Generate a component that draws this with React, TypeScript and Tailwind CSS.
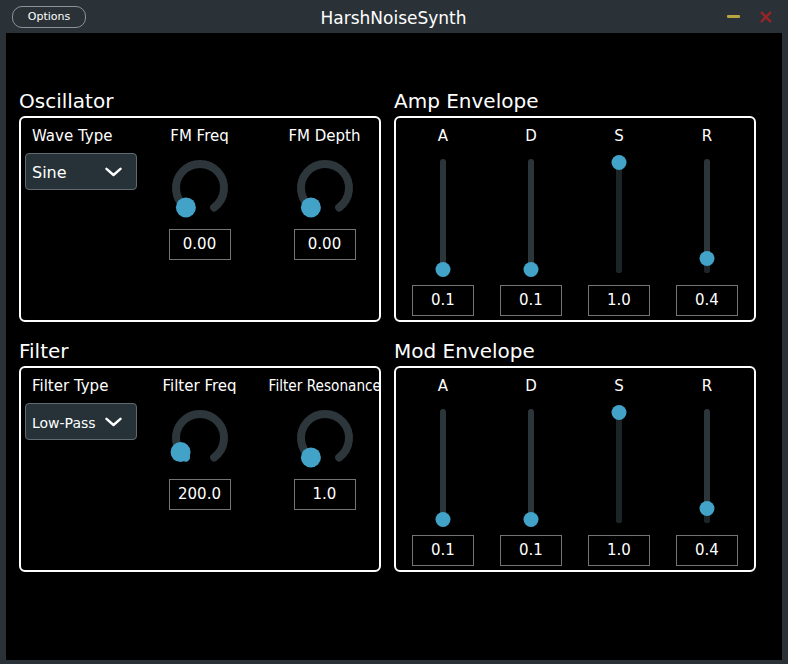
const BLUE = '#42a2c8'

type EnvParam = { name: string; value: string; thumbY: number }

const ampEnv: EnvParam[] = [
  { name: 'A', value: '0.1', thumbY: 119 },
  { name: 'D', value: '0.1', thumbY: 119 },
  { name: 'S', value: '1.0', thumbY: 12 },
  { name: 'R', value: '0.4', thumbY: 108 },
]

// knob angle in degrees, clockwise from 12 o'clock
function polar(deg: number, r: number) {
  const a = (deg * Math.PI) / 180
  return { x: 32 + r * Math.sin(a), y: 32 - r * Math.cos(a) }
}

function Knob({ angle }: { angle: number }) {
  const start = polar(216, 24)
  const end = polar(504, 24)
  const pos = polar(angle, 24)
  const large = angle - 216 > 180 ? 1 : 0
  return (
    <svg width="64" height="64" viewBox="0 0 64 64" className="mt-[11px]">
      <path
        d={`M${start.x} ${start.y} A24 24 0 1 1 ${end.x} ${end.y}`}
        fill="none"
        stroke="#2d363b"
        strokeWidth="8"
        strokeLinecap="round"
      />
      {angle > 216 && (
        <path
          d={`M${start.x} ${start.y} A24 24 0 ${large} 1 ${pos.x} ${pos.y}`}
          fill="none"
          stroke={BLUE}
          strokeWidth="8"
          strokeLinecap="round"
        />
      )}
      <circle cx={pos.x} cy={pos.y} r="10" fill={BLUE} />
    </svg>
  )
}

function ValueBox({ value }: { value: string }) {
  return (
    <div className="w-[62px] h-[31px] border border-[#747474] bg-black flex items-center justify-center text-[15px] leading-none">
      {value}
    </div>
  )
}

function KnobColumn({ label, value, angle, squeeze }: { label: string; value: string; angle: number; squeeze?: boolean }) {
  return (
    <div className="flex flex-col items-center">
      <div className={squeeze ? 'text-[15px] leading-[18px] whitespace-nowrap scale-x-[0.91]' : 'text-[15px] leading-[18px] whitespace-nowrap'}>
        {label}
      </div>
      <Knob angle={angle} />
      <div className="mt-[9px]">
        <ValueBox value={value} />
      </div>
    </div>
  )
}

function ComboColumn({ label, value, small }: { label: string; value: string; small?: boolean }) {
  return (
    <div className="flex flex-col items-start">
      <div className="ml-[7px] text-[15px] leading-[18px] whitespace-nowrap">{label}</div>
      <div className="mt-[8px] w-[112px] h-[37px] rounded-[4px] border border-[#5f6b70] bg-[#263238] flex items-center justify-between pl-[6px] pr-[14px]">
        <span className={small ? 'text-[14px] leading-none pt-[2px]' : 'text-[16px] leading-none pt-[2px]'}>{value}</span>
        <svg width="17" height="10" viewBox="0 0 17 10">
          <path d="M1.5 1.8 L8.5 8 L15.5 1.8" fill="none" stroke="white" strokeWidth="2.4" strokeLinecap="round" strokeLinejoin="round" />
        </svg>
      </div>
    </div>
  )
}

function VSlider({ param }: { param: EnvParam }) {
  return (
    <div className="flex flex-col items-center">
      <div className="text-[15px] leading-[18px]">{param.name}</div>
      <div className="relative mt-[5px] w-[16px] h-[130px]">
        <div className="absolute left-1/2 -translate-x-1/2 top-[9px] bottom-[7px] w-[6px] rounded-full bg-[#2c353a]" />
        <div
          className="absolute left-1/2 -translate-x-1/2 bottom-[7px] w-[6px] rounded-full bg-[#1d2427]"
          style={{ top: param.thumbY }}
        />
        <div
          className="absolute left-1/2 -translate-x-1/2 w-[15px] h-[15px] rounded-full bg-[#42a2c8]"
          style={{ top: param.thumbY - 7.5 }}
        />
      </div>
      <div className="mt-[5px]">
        <ValueBox value={param.value} />
      </div>
    </div>
  )
}

function Section({ title, children }: { title: string; children: React.ReactNode }) {
  return (
    <div className="flex flex-col">
      <div className="text-[20px] leading-[20px] whitespace-nowrap">{title}</div>
      <div className="mt-[5px] h-[206px] border-2 border-white rounded-[6px] pt-[9px]">{children}</div>
    </div>
  )
}

function EnvelopeBox({ params }: { params: EnvParam[] }) {
  return (
    <div className="grid grid-cols-4 px-[3px]">
      {params.map(p => (
        <VSlider key={p.name} param={p} />
      ))}
    </div>
  )
}

function TitleBar() {
  return (
    <div className="h-[33px] grid grid-cols-[1fr_auto_1fr] items-center">
      <div className="flex items-center pl-[12px]">
        <button className="w-[74px] h-[22px] rounded-[10px] border-[1.5px] border-[#8a9499] bg-[#2a3237] text-[11px] leading-none text-white flex items-center justify-center">
          Options
        </button>
      </div>
      <div className="text-[17px] leading-none pt-[3px] pr-[1px]">HarshNoiseSynth</div>
      <div className="flex items-center justify-end pr-[16px] gap-[20px]">
        <div className="w-[13px] h-[3px] bg-[#b8a540] rounded-[1px]" />
        <svg width="12" height="12" viewBox="0 0 12 12">
          <path d="M1 1 L11 11 M11 1 L1 11" stroke="#9a2428" strokeWidth="2.4" />
        </svg>
      </div>
    </div>
  )
}

export default function App() {
  return (
    <div className="w-[788px] h-[664px] bg-[#2a3237] flex flex-col text-white font-['DejaVu_Sans',sans-serif]">
      <TitleBar />
      <div className="flex-1 flex pl-[6px] pr-[6px] pb-[4px]">
        <div className="flex-1 bg-black pt-[58px] pl-[13px]">
          <div className="grid grid-cols-[362px_362px] gap-x-[13px] gap-y-[19px]">
            <Section title="Oscillator">
              <div className="grid grid-cols-[112px_125px_125px] pl-[4px]">
                <ComboColumn label="Wave Type" value="Sine" />
                <KnobColumn label="FM Freq" value="0.00" angle={216} />
                <KnobColumn label="FM Depth" value="0.00" angle={216} />
              </div>
            </Section>
            <Section title="Amp Envelope">
              <EnvelopeBox params={ampEnv} />
            </Section>
            <Section title="Filter">
              <div className="grid grid-cols-[112px_125px_125px] pl-[4px]">
                <ComboColumn label="Filter Type" value="Low-Pass" small />
                <KnobColumn label="Filter Freq" value="200.0" angle={234} />
                <KnobColumn label="Filter Resonance" value="1.0" angle={216} squeeze />
              </div>
            </Section>
            <Section title="Mod Envelope">
              <EnvelopeBox params={ampEnv} />
            </Section>
          </div>
        </div>
      </div>
    </div>
  )
}
